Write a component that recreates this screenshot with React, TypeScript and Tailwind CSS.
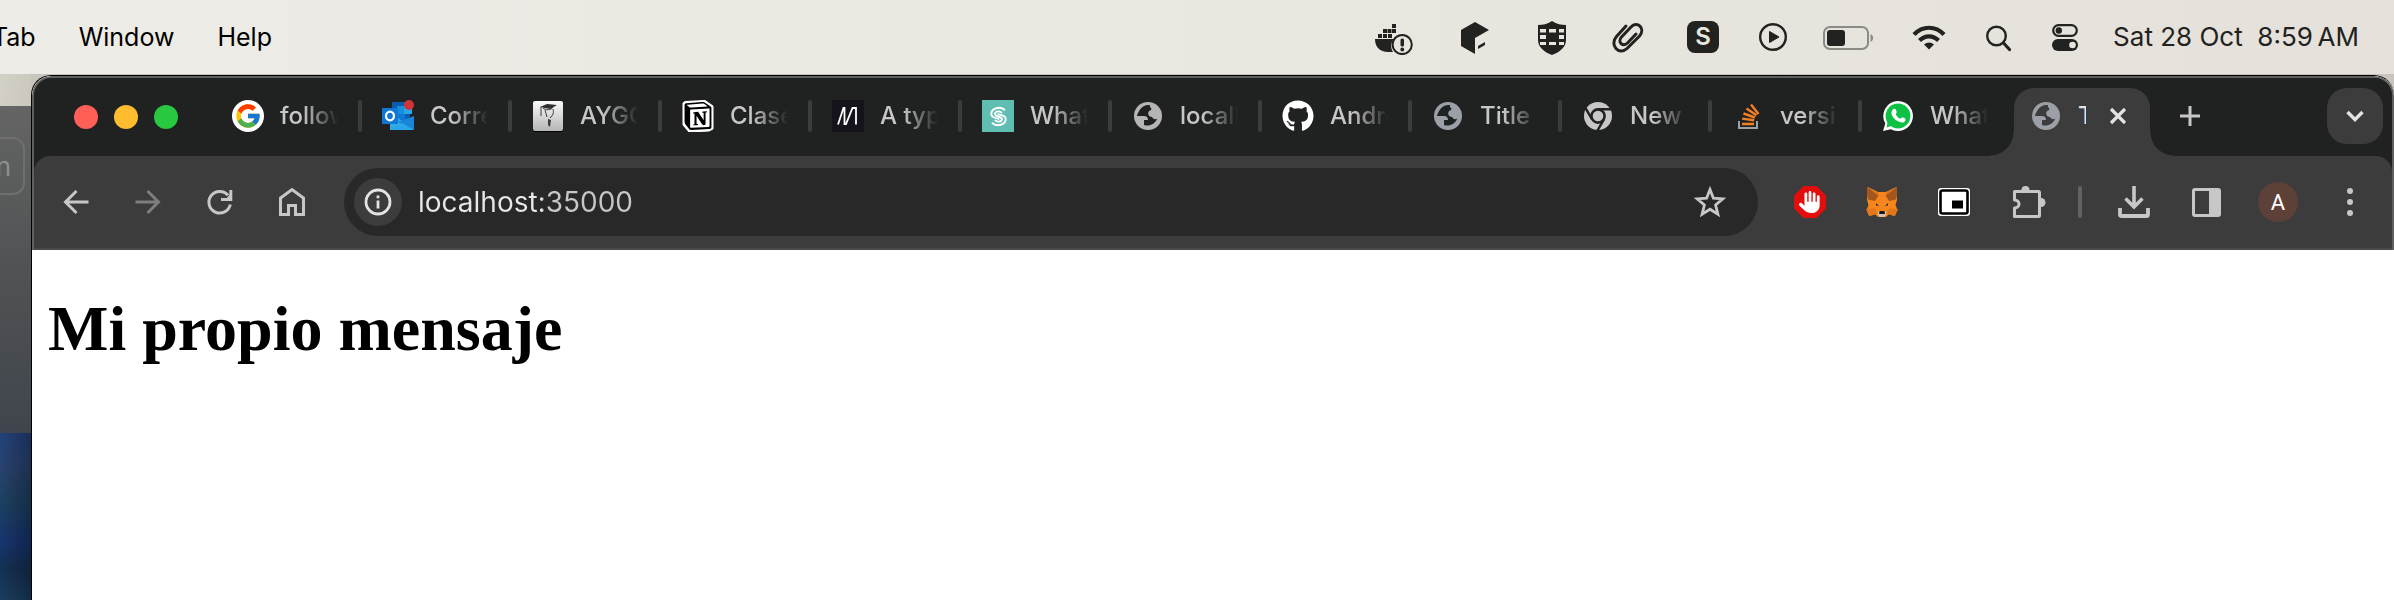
import React from "react";
import { FcGoogle } from "react-icons/fc";
import { FaGithub, FaHand } from "react-icons/fa6";
import { SiNotion } from "react-icons/si";

type SvgProps = { w: number; h: number; className?: string; children: React.ReactNode };

function Svg({ w, h, className = "", children }: SvgProps) {
  return (
    <svg width={w} height={h} viewBox={`0 0 ${w} ${h}`} fill="none" aria-hidden="true" className={`shrink-0 ${className}`}>
      {children}
    </svg>
  );
}

/* ---------- menu bar icons ---------- */

const DockerIcon = () => (
  <Svg w={44} h={36}>
    <g fill="#222220">
      <path d="M2 20h19c-3 3-4 8-1 13h-5C7 33 2 28 2 20Z" />
      <rect x="5" y="15" width="4" height="4" />
      <rect x="10" y="15" width="4" height="4" />
      <rect x="15" y="15" width="4" height="4" />
      <rect x="10" y="10" width="4" height="4" />
      <rect x="14.500" y="10" width="4" height="4" />
      <rect x="19" y="10" width="4" height="4" />
      <rect x="19" y="5" width="4" height="4" />
      <rect x="27.500" y="19.500" width="3.500" height="8" rx="1.500" />
      <circle cx="29.250" cy="30.500" r="1.900" />
    </g>
    <circle cx="29.200" cy="25.500" r="9.600" stroke="#222220" strokeWidth="2" />
  </Svg>
);

const CubeIcon = () => (
  <Svg w={44} h={36}>
    <path d="M22 3 36 11 22 19V35L8 27V11Z" fill="#222220" />
    <path d="M25 27 32 23V26L25 30Z" fill="#222220" />
  </Svg>
);

const ShieldIcon = () => (
  <Svg w={38} h={36}>
    <path d="M5 6c5 0 9-1 14-4 5 3 9 4 14 4v15c0 7-6 12-14 15C11 33 5 28 5 21Z" fill="#222220" />
    <g fill="#e8e6df">
      <rect x="7" y="10" width="6" height="3.500" />
      <rect x="16" y="10" width="7" height="3.500" />
      <rect x="26" y="10" width="5" height="3.500" />
      <rect x="7" y="16" width="6" height="4" />
      <rect x="26" y="16" width="5" height="4" />
      <rect x="7" y="23" width="6" height="3" />
      <rect x="16" y="23" width="7" height="3" />
      <rect x="26" y="23" width="5" height="3" />
    </g>
  </Svg>
);

const ClipIcon = () => (
  <Svg w={44} h={36}>
    <path
      d="M19 7 9.500 17.500C2 26 12 37 20 29.500L32.500 17C39 9 30 1.500 24 8L14.500 18C10 23 16 28.500 20.500 24L29 15"
      stroke="#222220"
      strokeWidth="3"
      strokeLinecap="round"
    />
  </Svg>
);

const SkypeIcon = () => (
  <span className="flex w-9 shrink-0">
    <span className="flex size-8 items-center justify-center rounded-lg bg-[#222220] font-['Inter'] text-[24px] font-semibold leading-none text-[#e8e6df]">
      S
    </span>
  </span>
);

const PlayIcon = () => (
  <Svg w={28} h={36}>
    <circle cx="14" cy="18" r="12.800" stroke="#222220" strokeWidth="2.400" />
    <path d="M10.500 12.500v11l9.500-5.500Z" fill="#222220" stroke="#222220" strokeLinejoin="round" />
  </Svg>
);

const BatteryIcon = () => (
  <Svg w={52} h={36}>
    <rect x="1" y="8" width="44" height="22" rx="6" stroke="#8b8a86" strokeWidth="2" />
    <rect x="4" y="11" width="18" height="16" rx="3" fill="#222220" />
    <path d="M47.500 15v8c3.500-1.500 3.500-6.500 0-8Z" fill="#8b8a86" />
  </Svg>
);

const WifiIcon = () => (
  <Svg w={38} h={36}>
    <g stroke="#222220" strokeWidth="4.200">
      <path d="M3 15.500c8.500-9 21.500-9 30 0" />
      <path d="M8.500 21.500c5.500-5.500 13.500-5.500 19 0" />
    </g>
    <path d="M18 30.500 13 25.500c3-2.700 7-2.700 10 0Z" fill="#222220" />
  </Svg>
);

const SearchIcon = () => (
  <Svg w={28} h={36}>
    <circle cx="11.500" cy="17" r="9.300" stroke="#222220" strokeWidth="2.400" />
    <path d="m18.500 24 6 6.500" stroke="#222220" strokeWidth="3.200" strokeLinecap="round" />
  </Svg>
);

const ControlIcon = () => (
  <Svg w={32} h={36}>
    <rect x="4.200" y="6.200" width="23.600" height="10.600" rx="5.300" stroke="#222220" strokeWidth="2.200" />
    <circle cx="9.800" cy="11.500" r="3.200" fill="#222220" />
    <rect x="3" y="20" width="26" height="12" rx="6" fill="#222220" />
    <circle cx="23.500" cy="26" r="3.300" fill="#e7e4dd" />
  </Svg>
);

/* ---------- tab icons ---------- */

const GoogleIcon = () => (
  <span className="flex size-8 shrink-0 items-center justify-center rounded-full bg-white">
    <FcGoogle size={28} />
  </span>
);

const OutlookIcon = () => (
  <Svg w={32} h={32}>
    <rect x="10" y="2" width="18" height="22" fill="#0a5cad" />
    <rect x="15" y="6" width="8" height="8" fill="#1490df" />
    <rect x="22" y="6" width="8" height="8" fill="#28a8ea" />
    <rect x="15" y="14" width="8" height="8" fill="#0f78d4" />
    <path d="M8 18h8l16 12H8Z" fill="#32a9e7" />
    <path d="M32 16v14L16 22Z" fill="#1a86d9" />
    <path d="M8 30h24L20 23Z" fill="#28a8ea" />
    <rect y="8" width="16" height="16" rx="1" fill="#0f78d4" />
    <ellipse cx="8" cy="16" rx="4" ry="4.300" stroke="#fff" strokeWidth="2.300" />
    <circle cx="27" cy="5" r="5" fill="#d13438" />
  </Svg>
);

const GraduateIcon = () => (
  <Svg w={32} h={32}>
    <defs>
      <linearGradient id="grad" x1="0" y1="0" x2="0" y2="1">
        <stop offset="0" stopColor="#fbfbfb" />
        <stop offset="1" stopColor="#b5b5b5" />
      </linearGradient>
    </defs>
    <rect x="1" y="2" width="30" height="30" rx="2" fill="#050505" />
    <rect x="1" y="1" width="30" height="30" rx="2" fill="url(#grad)" />
    <path d="M8 7 15 4l10 1-7 4Z" fill="#2f2f2f" />
    <path d="M11 8c2 2 8 3 10-1M9 7v9M13 10l2 7M21 9c1 4 0 6-3 9" stroke="#3c3c3c" strokeWidth="1" />
    <path d="m16 19 3 1-1 7-2-2Z" fill="#3a3a3a" />
  </Svg>
);

const NotionIcon = () => (
  <Svg w={32} h={32}>
    <path d="M3 1.500 23 .500 31 6v23l-4 2-20 1-6-7V3Z" fill="#fff" stroke="#fff" strokeLinejoin="round" />
    <g transform="translate(2 2)">
      <SiNotion size={28} color="#000" />
    </g>
  </Svg>
);

const MediumIcon = () => (
  <Svg w={32} h={32}>
    <rect width="32" height="32" fill="#15141c" />
    <path d="M6 24.500 11.500 8h1v16h1.500L20.500 8H24v16.500" stroke="#fff" strokeWidth="1.800" />
  </Svg>
);

const SwirlIcon = () => (
  <Svg w={32} h={32}>
    <rect width="32" height="32" fill="#5fbdb2" />
    <g stroke="#fff" strokeWidth="1.900" strokeLinecap="round">
      <path d="M19.500 12.500C17 10.500 12.800 11.500 13 14c.2 3 7 2 7 5.200 0 2.300-4 3.300-6.500 1.300" />
      <path d="M22.500 9.800C18 6 9.300 8 9.300 14c0 5 7.200 3.500 7.200 5" />
      <path d="M10.500 23.200C15 27 23.700 25 23.700 19c0-5-7.200-3.500-7.200-5" />
    </g>
  </Svg>
);

const GlobeIcon = ({ color = "#b5b5b5", hole = "#202221" }: { color?: string; hole?: string }) => (
  <Svg w={32} h={32}>
    <circle cx="16" cy="16" r="14" fill={color} />
    <path
      d="M18 5c-4-.600-8 1.200-10 4.500C6.200 12.500 5.300 14 5 16h7c3 0 4 2 4 4h-4v5c5 1.600 11-.600 13.200-6.500-2 1.500-4.500.500-5-1.500-2 0-4-1-4-3.500 0-2 1-3 3-3.500V8c-1.200-.500-1.600-1.700-1.200-3Z"
      fill={hole}
    />
  </Svg>
);

const GithubIcon = () => (
  <span className="flex size-8 shrink-0 items-center justify-center text-white">
    <FaGithub size={32} />
  </span>
);

const ChromeIcon = () => (
  <Svg w={32} h={32}>
    <circle cx="16" cy="16" r="14" fill="#c7c7c7" />
    <circle cx="16" cy="16" r="6.600" stroke="#202221" strokeWidth="2.600" />
    <g stroke="#202221" strokeWidth="2.400">
      <path d="M16 9.200h14" />
      <path d="M16 9.200h14" transform="rotate(120 16 16)" />
      <path d="M16 9.200h14" transform="rotate(240 16 16)" />
    </g>
  </Svg>
);

const StackIcon = () => (
  <Svg w={32} h={32}>
    <path d="M7 21v7h18v-7" stroke="#9ba1a6" strokeWidth="2" />
    <g stroke="#f48024" strokeWidth="2.400">
      <path d="M10 24h12" />
      <path d="m10.200 18.600 12 1.700" />
      <path d="m11.500 13.500 11.500 4" />
      <path d="m14.500 8.500 10 6.800" />
      <path d="m19 4.500 7.500 9.500" />
    </g>
  </Svg>
);

const WhatsAppIcon = () => (
  <Svg w={32} h={32}>
    <path d="M16 1a15 15 0 1 1-7.200 28.200L1 31l2.300-7.400A15 15 0 0 1 16 1Z" fill="#fff" />
    <circle cx="16" cy="16" r="12.400" fill="#0cc143" />
    <path d="M6 20 4.600 27.400 12 25Z" fill="#0cc143" />
    <path
      d="M11.500 9c1-.700 2-.300 2.400.800l.900 2.200c.200.700-1.300 1.800-1 2.400 1 2 2.300 3.200 4.400 4.200.700.300 1.600-1.700 2.400-1.400l2.600 1.300c.6.400.4 1.600-.1 2.400-1.600 2.300-4.600 1.900-7.600.2-2.800-1.600-5.300-4.600-6-7.200-.4-1.700.4-3.700 2-4.900Z"
      fill="#fff"
    />
  </Svg>
);

type Tab = { title: string; icon: React.ReactNode };

const tabs: Tab[] = [
  { title: "follow", icon: <GoogleIcon /> },
  { title: "Correo", icon: <OutlookIcon /> },
  { title: "AYGO", icon: <GraduateIcon /> },
  { title: "Clases", icon: <NotionIcon /> },
  { title: "A type", icon: <MediumIcon /> },
  { title: "What", icon: <SwirlIcon /> },
  { title: "localh", icon: <GlobeIcon /> },
  { title: "Andre", icon: <GithubIcon /> },
  { title: "Title", icon: <GlobeIcon color="#9aa0a6" /> },
  { title: "New", icon: <ChromeIcon /> },
  { title: "versi", icon: <StackIcon /> },
  { title: "What", icon: <WhatsAppIcon /> },
];

/* ---------- toolbar icons ---------- */

const BackIcon = () => (
  <Svg w={32} h={32}>
    <path d="M28.500 16H6M16.500 5 5.500 16l11 11" stroke="#c7c7c7" strokeWidth="3" />
  </Svg>
);

const ForwardIcon = () => (
  <Svg w={32} h={32}>
    <path d="M3.500 16H26M15.500 5l11 11-11 11" stroke="#7e7e7e" strokeWidth="3" />
  </Svg>
);

const ReloadIcon = () => (
  <Svg w={32} h={32}>
    <path d="M26.300 18.500A10.800 10.800 0 1 1 24 9.300" stroke="#c7c7c7" strokeWidth="3" />
    <path d="M26.800 4v9.500H17" stroke="#c7c7c7" strokeWidth="3" />
    <path d="M22 13 27 7v6Z" fill="#c7c7c7" />
  </Svg>
);

const HomeIcon = () => (
  <Svg w={32} h={32}>
    <path d="M4.500 28.500V12L16 3.500 27.500 12v16.500h-8v-9h-7v9Z" stroke="#c7c7c7" strokeWidth="3" />
  </Svg>
);

const InfoIcon = () => (
  <Svg w={32} h={32}>
    <circle cx="16" cy="16" r="12" stroke="#e3e3e3" strokeWidth="2.800" />
    <rect x="14.600" y="14.500" width="2.800" height="8" fill="#e3e3e3" />
    <rect x="14.600" y="9.500" width="2.800" height="2.800" fill="#e3e3e3" />
  </Svg>
);

const StarIcon = () => (
  <Svg w={36} h={36}>
    <path
      d="m18 5.500 3.400 8.700 9.400.700-7.200 6.100 2.300 9.200L18 25.200l-7.900 5 2.300-9.200-7.200-6.100 9.400-.700Z"
      stroke="#c7c7c7"
      strokeWidth="2.800"
    />
  </Svg>
);

const AdblockIcon = () => (
  <span className="relative flex size-8 items-center justify-center">
    <Svg w={32} h={32}>
      <path d="M9.500 0h13L32 9.500v13L22.500 32h-13L0 22.500v-13Z" fill="#e40d0d" />
    </Svg>
    <FaHand size={22} color="#fff" className="absolute" />
  </span>
);

const FoxIcon = () => (
  <Svg w={32} h={32}>
    <path d="M1.500 1 12 6h8l10.500-5L31 14l-1.500 5 2 5-2.500 6-6-2-3 3h-8l-3-3-6 2-2.500-6 2-5L1 14Z" fill="#f6851b" />
    <path d="M1.500 1 12.500 9.500 9 15l-7-1.500-1-5Zm29 0L19.500 9.500 23 15l7-1.500 1-5Z" fill="#a4561f" />
    <path d="m1.500 1 10.500 5 .500 3.500Zm29 0L20 6l-.500 3.500Z" fill="#e2761b" />
    <path d="m0 23 9-.500 2 5.500-7 2Zm32 0-9-.500-2 5.500 7 2Z" fill="#e2761b" />
    <path d="m10 17 3 3-3-.500Zm12 0-3 3 3-.500Z" fill="#233447" />
    <path d="m12 26 1-1h6l1 1v3l-2 2h-4l-2-2Z" fill="#d7c1b3" />
    <path d="M13.500 25h5l.5 3h-6Z" fill="#161616" />
  </Svg>
);

const PipIcon = () => (
  <Svg w={32} h={32}>
    <rect y="2" width="32" height="28" rx="3" fill="#fff" />
    <rect x="2.500" y="4.500" width="27" height="23" rx="2" fill="#fff" stroke="#000" strokeWidth="2.600" />
    <rect x="14" y="14.500" width="11" height="8" fill="#000" />
  </Svg>
);

const ExtensionIcon = () => (
  <Svg w={36} h={36}>
    <path d="M11.500 6a4 4 0 0 1 8 0Z" fill="#c7c7c7" />
    <path d="M31 14a4 4 0 0 1 0 9Z" fill="#c7c7c7" />
    <path
      d="M4.500 7.500h24a1 1 0 0 1 1 1v23a1 1 0 0 1-1 1h-24v-8.500c6 0 6-8 0-8Z"
      stroke="#c7c7c7"
      strokeWidth="3"
      strokeLinejoin="round"
    />
  </Svg>
);

const DownloadIcon = () => (
  <Svg w={32} h={32}>
    <path d="M16 0v20M7.500 12.500 16 21l8.500-8.500" stroke="#c7c7c7" strokeWidth="3.600" />
    <path d="M2 22v6.500a1.500 1.500 0 0 0 1.500 1.500h25a1.500 1.500 0 0 0 1.500-1.500V22" stroke="#c7c7c7" strokeWidth="3.800" />
  </Svg>
);

const PanelIcon = () => (
  <Svg w={32} h={32}>
    <rect x="3.500" y="3.500" width="26" height="26" rx="1.500" stroke="#c7c7c7" strokeWidth="3" />
    <rect x="19" y="3" width="11" height="27" fill="#c7c7c7" />
  </Svg>
);

const DotsIcon = () => (
  <Svg w={32} h={32}>
    <g fill="#c7c7c7">
      <circle cx="16" cy="5" r="3" />
      <circle cx="16" cy="16" r="3" />
      <circle cx="16" cy="27" r="3" />
    </g>
  </Svg>
);

function MenuBar() {
  return (
    <header className="flex h-[74px] items-center justify-between bg-linear-to-r from-[#edece6] via-[#e9e7e0] to-[#e5e1da] pr-[35px] leading-8 text-[#222220]">
      <nav className="-ml-2 flex items-center gap-[43px] text-[25px] text-black">
        <button type="button">Tab</button>
        <button type="button">Window</button>
        <button type="button">Help</button>
      </nav>
      <div className="flex items-center gap-8">
        <div className="flex items-center gap-9">
          <DockerIcon />
          <CubeIcon />
          <ShieldIcon />
          <ClipIcon />
          <SkypeIcon />
          <PlayIcon />
          <BatteryIcon />
          <WifiIcon />
          <SearchIcon />
          <ControlIcon />
        </div>
        <time className="whitespace-pre text-[26px]">Sat 28 Oct  8:59{"\u2009"}AM</time>
      </div>
    </header>
  );
}

function TabStrip() {
  return (
    <div className="flex h-[78px] items-start bg-[#202221] pr-[9px]">
      <div className="flex h-[78px] shrink-0 items-center gap-4 pl-10 pr-[42px]">
        <button type="button" aria-label="Close" className="size-6 rounded-full bg-[#ff5f57]" />
        <button type="button" aria-label="Minimise" className="size-6 rounded-full bg-[#febc2e]" />
        <button type="button" aria-label="Zoom" className="size-6 rounded-full bg-[#28c840]" />
      </div>
      {tabs.map((tab, i) => (
        <div key={i} className="flex h-[76px] w-[150px] shrink-0 items-center last-of-type:w-auto">
          <button type="button" className="flex min-w-0 flex-1 items-center gap-4 pl-3 text-left">
            {tab.icon}
            <span className="w-[58px] overflow-hidden whitespace-nowrap mask-r-from-40% text-[24px] font-medium leading-8 text-[#c7c7c7]">
              {tab.title}
            </span>
          </button>
          {i < tabs.length - 1 && <span className="mr-2 h-8 w-1 rounded-sm bg-[#3c3c3c]" />}
        </div>
      ))}
      <div className="relative -ml-[6px] mt-[10px] h-[68px] w-[136px] shrink-0 rounded-t-[20px] bg-[#3c3c3c]">
        <span className="absolute -left-6 bottom-0 size-6 bg-[radial-gradient(circle_at_0_0,#202221_23px,#3c3c3c_24px)]" />
        <span className="absolute -right-6 bottom-0 size-6 bg-[radial-gradient(circle_at_100%_0,#202221_23px,#3c3c3c_24px)]" />
        <div className="flex h-14 items-center pl-4">
          <GlobeIcon color="#9aa0a6" hole="#3c3c3c" />
          <span className="ml-4 w-2 overflow-hidden text-[24px] font-medium leading-8 text-[#e3e3e3]">T</span>
          <button type="button" aria-label="Close tab" className="ml-4">
            <Svg w={32} h={32}>
              <path d="m9 9 14 14M23 9 9 23" stroke="#e3e3e3" strokeWidth="3.200" />
            </Svg>
          </button>
        </div>
      </div>
      <button type="button" aria-label="New tab" className="ml-6 mt-[10px] flex h-14 w-8 items-center justify-center">
        <Svg w={32} h={32}>
          <path d="M16 6v20M6 16h20" stroke="#c7c7c7" strokeWidth="3" />
        </Svg>
      </button>
      <button
        type="button"
        aria-label="Search tabs"
        className="ml-auto mt-[10px] flex size-14 items-center justify-center rounded-[20px] bg-[#3c3c3c]"
      >
        <Svg w={24} h={24}>
          <path d="m4.500 8 7.500 7.500L19.500 8" stroke="#e3e3e3" strokeWidth="3.400" />
        </Svg>
      </button>
    </div>
  );
}

function Toolbar() {
  return (
    <div className="bg-[#202221]">
      <div className="flex h-[94px] items-center justify-between rounded-t-2xl border-b-2 border-[#494949] bg-[#3c3c3c] pl-[26px] pr-[26px]">
        <div className="flex items-center gap-10">
          <button type="button" aria-label="Back"><BackIcon /></button>
          <button type="button" aria-label="Forward"><ForwardIcon /></button>
          <button type="button" aria-label="Reload"><ReloadIcon /></button>
          <button type="button" aria-label="Home"><HomeIcon /></button>
        </div>
        <div className="ml-9 mr-9 flex h-[68px] flex-1 items-center rounded-full bg-[#282828] pl-[10px] pr-[30px]">
          <button type="button" aria-label="View site information" className="flex size-12 shrink-0 items-center justify-center rounded-full bg-[#3c3c3c]">
            <InfoIcon />
          </button>
          <input
            aria-label="Address"
            defaultValue="localhost:35000"
            className="ml-4 min-w-0 flex-1 bg-linear-to-r from-[#e8e8e8] from-[124px] to-[#c7c7c7] to-[124px] bg-clip-text text-[28px] leading-9 text-transparent outline-none"
          />
          <button type="button" aria-label="Bookmark"><StarIcon /></button>
        </div>
        <div className="flex items-center gap-10">
          <button type="button" aria-label="Ad blocker"><AdblockIcon /></button>
          <button type="button" aria-label="Wallet"><FoxIcon /></button>
          <button type="button" aria-label="Picture in picture"><PipIcon /></button>
          <button type="button" aria-label="Extensions"><ExtensionIcon /></button>
        </div>
        <span className="ml-8 mr-9 h-8 w-1 rounded-sm bg-[#626262]" />
        <div className="flex items-center gap-10">
          <button type="button" aria-label="Downloads"><DownloadIcon /></button>
          <button type="button" aria-label="Side panel"><PanelIcon /></button>
          <button type="button" aria-label="Profile" className="-mx-1 flex size-10 items-center justify-center rounded-full bg-[#5d4037] font-['Roboto'] text-[22px] text-white">
            A
          </button>
          <button type="button" aria-label="Menu"><DotsIcon /></button>
        </div>
      </div>
    </div>
  );
}

function Desktop() {
  return (
    <div className="flex w-[31px] shrink-0 flex-col bg-[linear-gradient(100deg,#d3d0c6,#b5b1a8)]">
      <div className="mt-8 h-[327px] overflow-hidden bg-linear-to-b from-[#646564] via-[#505354] to-[#40454d] pt-[31px]">
        <div className="flex h-[58px] w-[25px] items-center justify-end rounded-r-xl border-2 border-l-0 border-[#6e6f6e] pr-3 text-[26px] text-[#8d908e]">
          <span>n</span>
        </div>
      </div>
      <div className="flex-1 bg-[linear-gradient(to_right,transparent,rgba(0,0,0,0.3)),linear-gradient(to_bottom,#23427c,#2a4470_20%,#1d4162_42%,#173570_65%,#153153_82%,#1b3f5f)]" />
    </div>
  );
}

export default function App() {
  return (
    <div className="flex min-h-screen flex-col bg-[#c9c5bc] font-['Inter',sans-serif]">
      <MenuBar />
      <div className="flex flex-1">
        <Desktop />
        <section className="mt-px flex min-w-0 flex-1 flex-col overflow-hidden rounded-t-[20px] border-l border-t border-black bg-white">
          <div className="overflow-hidden rounded-t-[20px] border-x-2 border-t-2 border-[#5e5f5e] bg-[#202221]">
            <TabStrip />
            <Toolbar />
          </div>
          <main className="px-4 pt-[42px] font-['Liberation_Serif',serif] text-black">
            <h1 className="text-[64px] font-bold leading-[74px]">Mi propio mensaje</h1>
          </main>
        </section>
      </div>
    </div>
  );
}
